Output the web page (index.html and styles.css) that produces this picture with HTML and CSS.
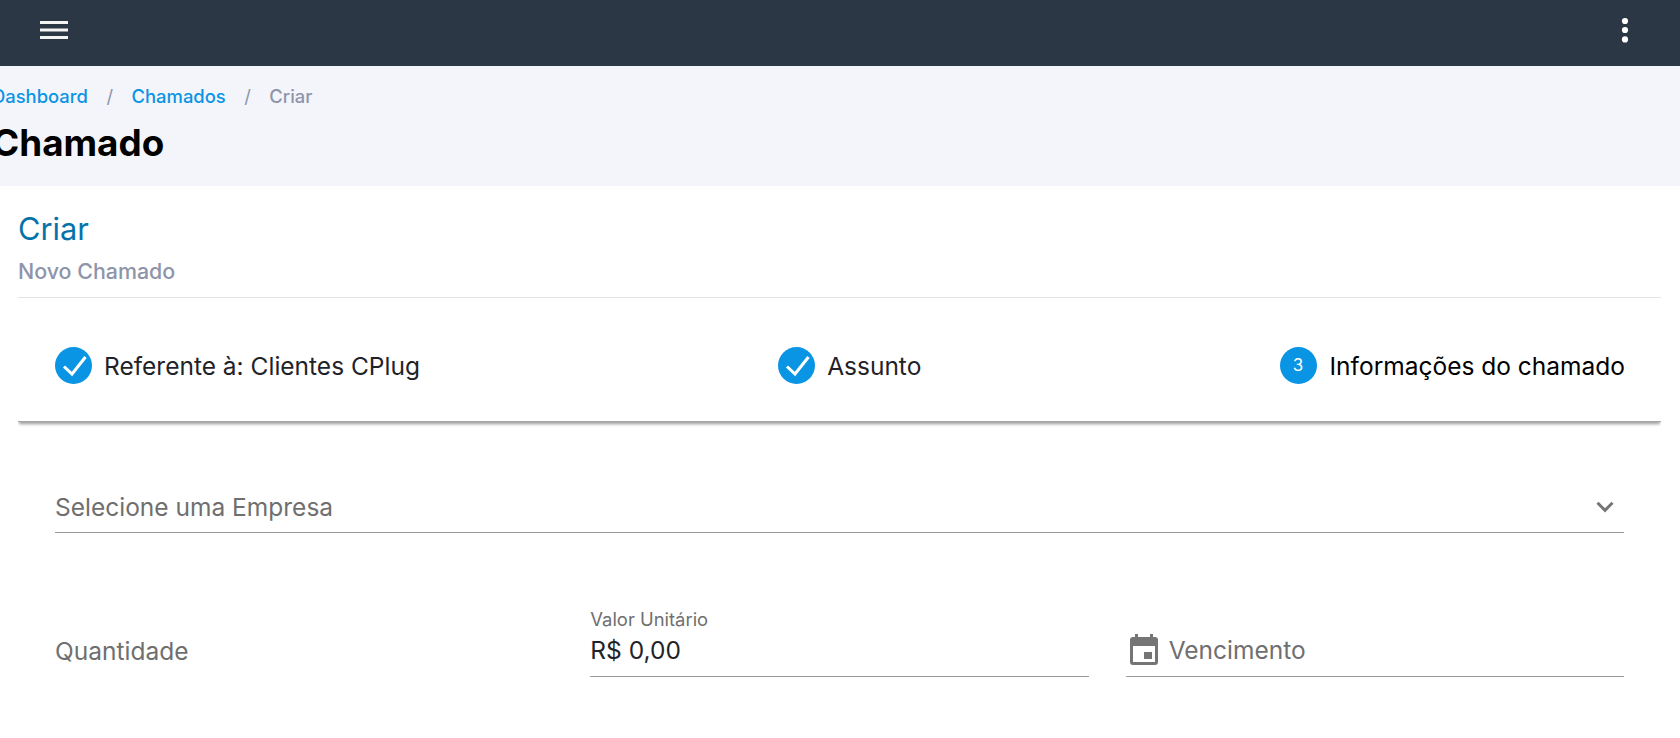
FILE: index.html
```html
<!DOCTYPE html>
<html lang="pt-BR">
<head>
<meta charset="utf-8">
<title>Chamado</title>
<link rel="stylesheet" href="styles.css">
</head>
<body>
<header class="topbar">
  <svg class="menu-icon" width="28" height="18" viewBox="0 0 28 18"><path d="M0 1.500h28M0 9h28M0 16.500h28" stroke="#f4f4f4" stroke-width="3"/></svg>
  <svg class="dots-icon" width="8" height="26" viewBox="0 0 8 26"><circle cx="4" cy="4" r="3.1"/><circle cx="4" cy="13" r="3.1"/><circle cx="4" cy="22.4" r="3.1"/></svg>
</header>
<section class="subheader">
  <nav class="crumbs">
    <a>Dashboard</a><span class="sep">/</span><a>Chamados</a><span class="sep">/</span><span class="current">Criar</span>
  </nav>
  <h1>Chamado</h1>
</section>
<main class="card">
  <div class="card-head">
    <h2>Criar</h2>
    <p>Novo Chamado</p>
  </div>
  <div class="stepper">
    <div class="step">
      <svg class="step-icon" width="37" height="37" viewBox="0 0 37 37"><circle cx="18.5" cy="18.5" r="18.5" fill="#0a94e4"/><path d="M9 19.500l8 7.500L30.500 10" fill="none" stroke="#fff" stroke-width="3"/></svg>
      <span>Referente à: Clientes CPlug</span>
    </div>
    <div class="step">
      <svg class="step-icon" width="37" height="37" viewBox="0 0 37 37"><circle cx="18.5" cy="18.5" r="18.5" fill="#0a94e4"/><path d="M9 19.500l8 7.500L30.500 10" fill="none" stroke="#fff" stroke-width="3"/></svg>
      <span>Assunto</span>
    </div>
    <div class="step step-active">
      <span class="step-num">3</span>
      <span>Informações do chamado</span>
    </div>
  </div>
  <form class="form">
    <div class="field select-field">
      <span class="placeholder">Selecione uma Empresa</span>
      <svg class="chevron" width="18" height="12" viewBox="0 0 18 12"><path d="M1.500 1.800L9 9.300l7.500-7.500" fill="none" stroke="#757575" stroke-width="3"/></svg>
    </div>
    <div class="form-row">
      <div class="field plain">
        <span class="placeholder">Quantidade</span>
      </div>
      <div class="field">
        <label>Valor Unitário</label>
        <span class="value">R$ 0,00</span>
      </div>
      <div class="field">
        <svg class="calendar" width="28" height="31" viewBox="0 0 28 31"><path fill="#757575" fill-rule="evenodd" d="M5 0h3v3h12V0h3v3h2a3 3 0 0 1 3 3v22a3 3 0 0 1-3 3H3a3 3 0 0 1-3-3V6a3 3 0 0 1 3-3h2zM3 12v16h22V12zM14 18h8v7h-8z"/></svg>
        <span class="placeholder">Vencimento</span>
      </div>
    </div>
  </form>
</main>
</body>
</html>
```
FILE: styles.css
```css
* { box-sizing: border-box; }
html, body { margin: 0; height: 100%; overflow: hidden; }
body { font-family: Inter, "Noto Sans", sans-serif; background: #fff; color: #000; width: 1680px; height: 738px; }

.topbar { height: 66px; background: #2c3745; display: flex; align-items: center; justify-content: space-between; padding: 0 51px 6px 40px; }
.dots-icon { fill: #fff; }

.subheader { height: 120px; background: #f4f5fb; padding: 20px 0 0 0; margin-left: -8px; }
.crumbs { display: flex; align-items: center; font-size: 18.400px; line-height: 20px; font-weight: 500; color: #0a94e4; }
.sep { color: #8e94aa; font-weight: 400; margin: 0 18.500px; }
.current { color: #8e94aa; }
h1 { margin: 16px 0 0; font-size: 36.800px; line-height: 42px; font-weight: 700; color: #000; }

.card { background: #fff; padding: 0 19px 0 18px; }
.card-head { height: 112px; border-bottom: 1px solid #e4e4e4; padding-top: 25px; }
h2 { margin: 0; font-size: 30.800px; line-height: 36px; font-weight: 400; color: #0573ab; }
.card-head p { margin: 12px 0 0; font-size: 21.400px; line-height: 24px; font-weight: 500; color: #8e94aa; }

.stepper { height: 124px; display: flex; justify-content: space-between; align-items: center; padding: 12px 36px 0 37px; box-shadow: 0 3px 3px -1px rgba(0,0,0,.4); clip-path: inset(0 0 -8px 0); border-bottom: 1px solid #a8a8a8; font-size: 24.500px; color: #1f2329; }
.step { display: flex; align-items: center; gap: 12px; }
.step-active { gap: 13px; color: #000; }
.step-icon { display: block; }
.step-num { width: 37px; height: 37px; border-radius: 50%; background: #0a94e4; color: #fff; font-size: 17px; display: flex; align-items: center; justify-content: center; padding-bottom: 2px; }

.form { padding: 0 37px; }
.field { display: flex; align-items: center; height: 56px; border-bottom: 1px solid #9b9b9b; position: relative; font-size: 24.500px; padding-top: 3px; }
.select-field { margin-top: 55px; justify-content: space-between; padding: 5px 10px 0 0; height: 56px; }
.placeholder { color: #6f6f6f; }
.value { color: #1f2329; }
.form-row { display: grid; grid-template-columns: repeat(3, 1fr); gap: 37px; margin-top: 88px; }
.plain { border-bottom: none; }
.field label { position: absolute; left: 0; top: -13px; font-size: 18.400px; line-height: 22px; color: #6f6f6f; }
.calendar { margin: 0 11px 2px 4px; }
```
